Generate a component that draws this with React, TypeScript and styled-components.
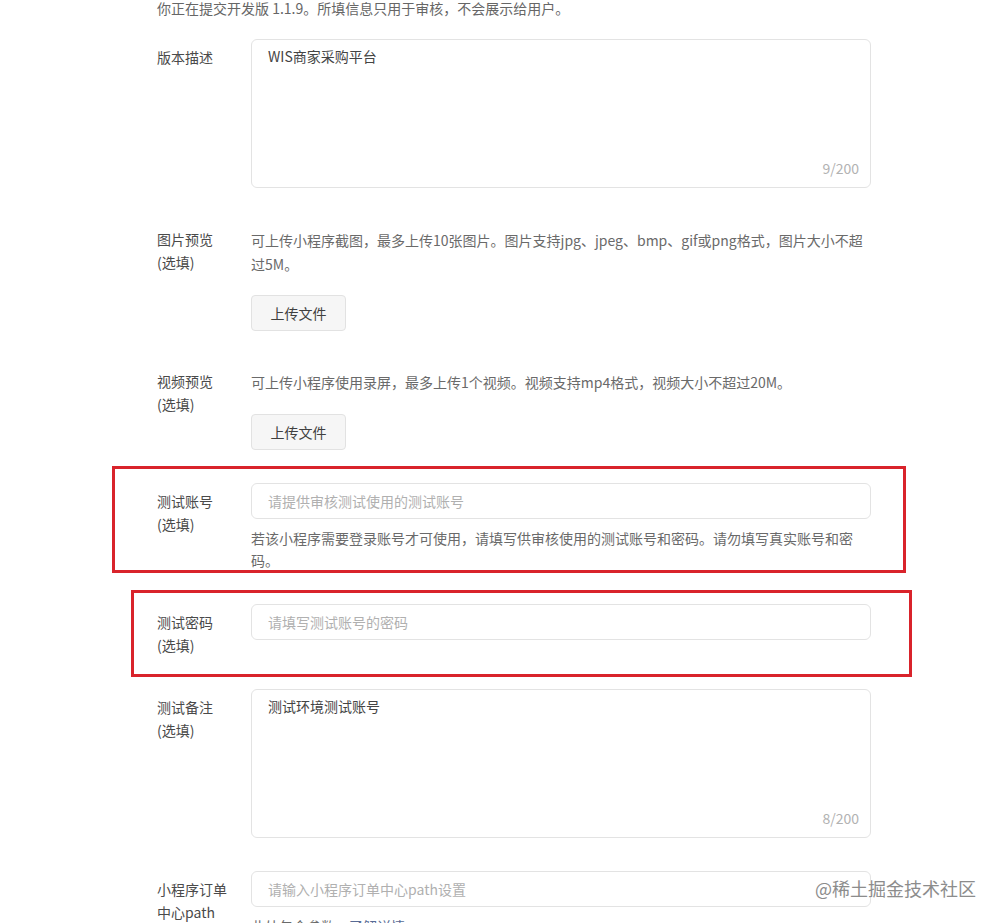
import styled, { createGlobalStyle } from "styled-components";

const GlobalStyle = createGlobalStyle`
  html, body {
    margin: 0;
    padding: 0;
    background: #fff;
  }
  body {
    font-family: "Noto Sans CJK SC", "Noto Sans", sans-serif;
    font-size: 14px;
    color: #404040;
  }
  * {
    box-sizing: border-box;
  }
`;

const rows = {
  desc: "WIS商家采购平台",
  remark: "测试环境测试账号",
};

const App = () => {
  return (
    <>
      <GlobalStyle />
      <Page>
        <Intro>你正在提交开发版 1.1.9。所填信息只用于审核，不会展示给用户。</Intro>

        <FormItem gap={19}>
          <Label boxed>版本描述</Label>
          <Field>
            <AreaBox>
              <AreaInput readOnly value={rows.desc} />
              <Counter>{rows.desc.length}/200</Counter>
            </AreaBox>
          </Field>
        </FormItem>

        <FormItem gap={40}>
          <Label>
            图片预览
            <br />
            (选填)
          </Label>
          <Field>
            <Desc>可上传小程序截图，最多上传10张图片。图片支持jpg、jpeg、bmp、gif或png格式，图片大小不超过5M。</Desc>
            <UploadButton gap={19}>上传文件</UploadButton>
          </Field>
        </FormItem>

        <FormItem gap={39}>
          <Label>
            视频预览
            <br />
            (选填)
          </Label>
          <Field>
            <Desc>可上传小程序使用录屏，最多上传1个视频。视频支持mp4格式，视频大小不超过20M。</Desc>
            <UploadButton gap={20}>上传文件</UploadButton>
          </Field>
        </FormItem>

        <FormItem gap={33}>
          <Label boxed>
            测试账号
            <br />
            (选填)
          </Label>
          <Field>
            <TextInput placeholder="请提供审核测试使用的测试账号" />
            <Help>若该小程序需要登录账号才可使用，请填写供审核使用的测试账号和密码。请勿填写真实账号和密码。</Help>
          </Field>
        </FormItem>

        <FormItem gap={33}>
          <Label boxed>
            测试密码
            <br />
            (选填)
          </Label>
          <Field>
            <TextInput placeholder="请填写测试账号的密码" />
          </Field>
        </FormItem>

        <FormItem gap={32}>
          <Label boxed>
            测试备注
            <br />
            (选填)
          </Label>
          <Field>
            <AreaBox>
              <AreaInput readOnly value={rows.remark} />
              <Counter>{rows.remark.length}/200</Counter>
            </AreaBox>
          </Field>
        </FormItem>

        <FormItem gap={33}>
          <Label boxed>
            小程序订单
            <br />
            中心path
          </Label>
          <Field>
            <TextInput placeholder="请输入小程序订单中心path设置" />
            <Help>
              此处包含参数，<Link>了解详情</Link>
            </Help>
          </Field>
        </FormItem>

        {/* 标注框 */}
        <Mark style={{ left: 112, top: 466, width: 794, height: 107 }} />
        <Mark style={{ left: 131, top: 590, width: 781, height: 87 }} />

        <Watermark>@稀土掘金技术社区</Watermark>
      </Page>
    </>
  );
};

const Page = styled.div`
  position: relative;
  width: 1001px;
  height: 923px;
  overflow: hidden;
  padding-left: 157px;
`;

const Intro = styled.div`
  margin-top: -4px;
  line-height: 24px;
  color: #666;
`;

const FormItem = styled.div<{ gap: number }>`
  display: flex;
  align-items: flex-start;
  margin-top: ${(p) => p.gap}px;
`;

const Label = styled.div<{ boxed?: boolean }>`
  width: 94px;
  flex-shrink: 0;
  padding-top: ${(p) => (p.boxed ? 7 : 0)}px;
  line-height: 23px;
  color: #4a4a4a;
`;

const Field = styled.div`
  width: 620px;
  display: flex;
  flex-direction: column;
  align-items: flex-start;
`;

const AreaBox = styled.div`
  width: 620px;
  height: 149px;
  border: 1px solid #e3e3e3;
  border-radius: 6px;
  display: flex;
  flex-direction: column;
  background: #fff;
`;

const AreaInput = styled.textarea`
  flex: 1;
  border: none;
  outline: none;
  resize: none;
  padding: 4px 16px;
  font: inherit;
  line-height: 24px;
  color: #444;
  background: transparent;
`;

const Counter = styled.div`
  align-self: flex-end;
  padding: 0 11px 9px 0;
  line-height: 20px;
  color: #b2b2b2;
`;

const Desc = styled.div`
  line-height: 24px;
  color: #6a6a6a;
`;

const UploadButton = styled.button<{ gap: number }>`
  margin-top: ${(p) => p.gap}px;
  width: 95px;
  height: 36px;
  border: 1px solid #e2e2e2;
  border-radius: 4px;
  background: #f6f6f6;
  font: inherit;
  color: #404040;
  padding: 0;
`;

const TextInput = styled.input`
  width: 620px;
  height: 36px;
  border: 1px solid #e3e3e3;
  border-radius: 6px;
  padding: 0 16px;
  font: inherit;
  color: #444;
  outline: none;
  &::placeholder {
    color: #b0b0b0;
  }
`;

const Help = styled.div`
  margin-top: 8px;
  max-width: 608px;
  line-height: 22px;
  color: #6a6a6a;
`;

const Link = styled.span`
  color: #576b95;
`;

const Mark = styled.div`
  position: absolute;
  border: 3px solid #d9232b;
  pointer-events: none;
`;

const Watermark = styled.div`
  position: absolute;
  right: 25px;
  top: 876px;
  font-size: 18px;
  line-height: 24px;
  color: #8c8c8c;
  text-shadow: 0 0 2px #fff, 0 0 2px #fff;
`;

export default App;
